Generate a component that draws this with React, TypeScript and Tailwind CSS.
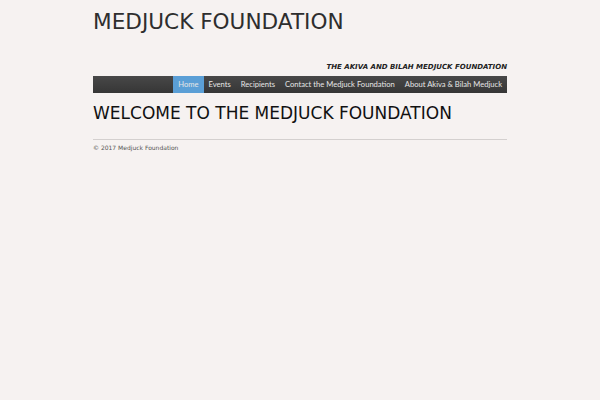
export default function App() {
  const nav = ['Home', 'Events', 'Recipients', 'Contact the Medjuck Foundation', 'About Akiva & Bilah Medjuck']

  return (
    <div className="min-h-[400px] bg-[#f6f2f1] font-['DejaVu_Sans',sans-serif]">
      <div className="mx-auto w-[414px]">
        <h1 className="pt-[9px] text-[21.6px] leading-[26px] text-[#2e2e2e]">MEDJUCK FOUNDATION</h1>
        <p className="mt-[27px] text-right text-[7px] font-bold italic leading-[10px] text-[#222]">
          THE AKIVA AND BILAH MEDJUCK FOUNDATION
        </p>
        <nav className="mt-[4px] flex h-[17px] justify-end bg-gradient-to-b from-[#484848] to-[#363636]">
          {nav.map((item) => (
            <a
              key={item}
              className={
                "flex items-center px-[5px] font-['Lato',sans-serif] text-[7.6px] text-[#e6e6e6] " +
                (item === 'Home' ? 'bg-[#5b9fd6]' : '')
              }
            >
              {item}
            </a>
          ))}
        </nav>
        <h2 className="mt-[9px] text-[17px] leading-[22px] text-[#111]">WELCOME TO THE MEDJUCK FOUNDATION</h2>
        <div className="mt-[15px] border-t border-[#d4d0cf]" />
        <p className="mt-[3px] text-[6px] leading-[10px] text-[#555]">© 2017 Medjuck Foundation</p>
      </div>
    </div>
  )
}
